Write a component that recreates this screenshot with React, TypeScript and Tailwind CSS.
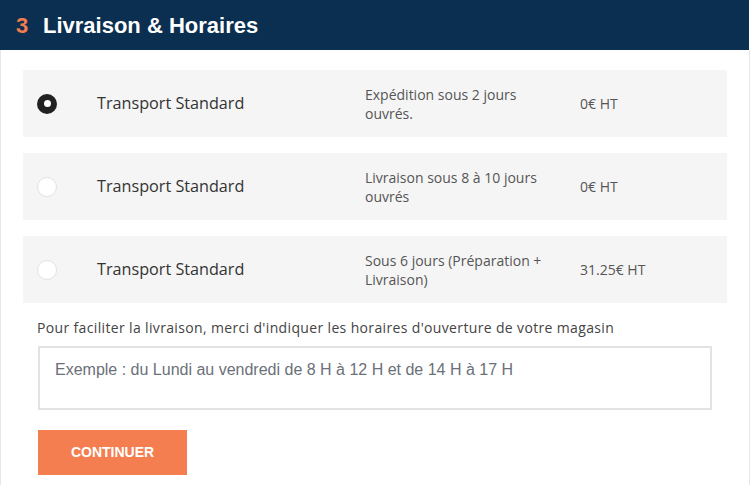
import React from "react";

const rows = [
  { selected: true, desc: "Expédition sous 2 jours ouvrés.", price: "0€ HT" },
  { selected: false, desc: "Livraison sous 8 à 10 jours ouvrés", price: "0€ HT" },
  { selected: false, desc: "Sous 6 jours (Préparation + Livraison)", price: "31.25€ HT" },
];

export default function App() {
  return (
    <div className="w-[750px] h-[485px] bg-white overflow-hidden">
      <div className="h-[50px] w-[749px] bg-[#0b2f50] flex items-center pl-[16px] font-['Liberation_Sans',Arial,sans-serif] font-bold text-[22px] text-white">
        <span className="text-[#f47c4f] w-[27px]">3</span>
        <span>Livraison &amp; Horaires</span>
      </div>
      <div className="h-[435px] border-l border-r border-[#e6e6e6] px-[22px] pt-[20px] font-['Open_Sans',sans-serif]">
        <div className="flex flex-col gap-[16px]">
          {rows.map((r, i) => (
            <div key={i} className="h-[67px] bg-[#f5f5f5] flex items-center">
              <div className="w-[74px] pl-[14px] flex items-center">
                {r.selected ? (
                  <div className="w-[20px] h-[20px] rounded-full bg-[#222] flex items-center justify-center">
                    <div className="w-[7px] h-[7px] rounded-full bg-white" />
                  </div>
                ) : (
                  <div className="w-[20px] h-[20px] rounded-full bg-white border border-[#e2e2e2]" />
                )}
              </div>
              <div className="w-[268px] text-[16.2px] font-medium text-[#333]">Transport Standard</div>
              <div className="w-[195px] mr-[20px] text-[14px] leading-[19px] text-[#555]">{r.desc}</div>
              <div className="text-[14px] text-[#555]">{r.price}</div>
            </div>
          ))}
        </div>
        <p className="mt-[16px] ml-[14px] text-[14px] tracking-[0.35px] leading-[18px] text-[#444]">
          Pour faciliter la livraison, merci d'indiquer les horaires d'ouverture de votre magasin
        </p>
        <textarea
          className="block mt-[9px] ml-[15px] w-[674px] h-[64px] border-2 border-[#e3e3e3] resize-none outline-none px-[15px] pt-[10px] font-['Liberation_Sans',Arial,sans-serif] text-[16px] placeholder:text-[#6b7079]"
          placeholder="Exemple : du Lundi au vendredi de 8 H à 12 H et de 14 H à 17 H"
        />
        <button className="mt-[20px] ml-[15px] w-[149px] h-[45px] bg-[#f47e50] text-white font-['Liberation_Sans',Arial,sans-serif] font-bold text-[14px]">
          CONTINUER
        </button>
      </div>
    </div>
  );
}
